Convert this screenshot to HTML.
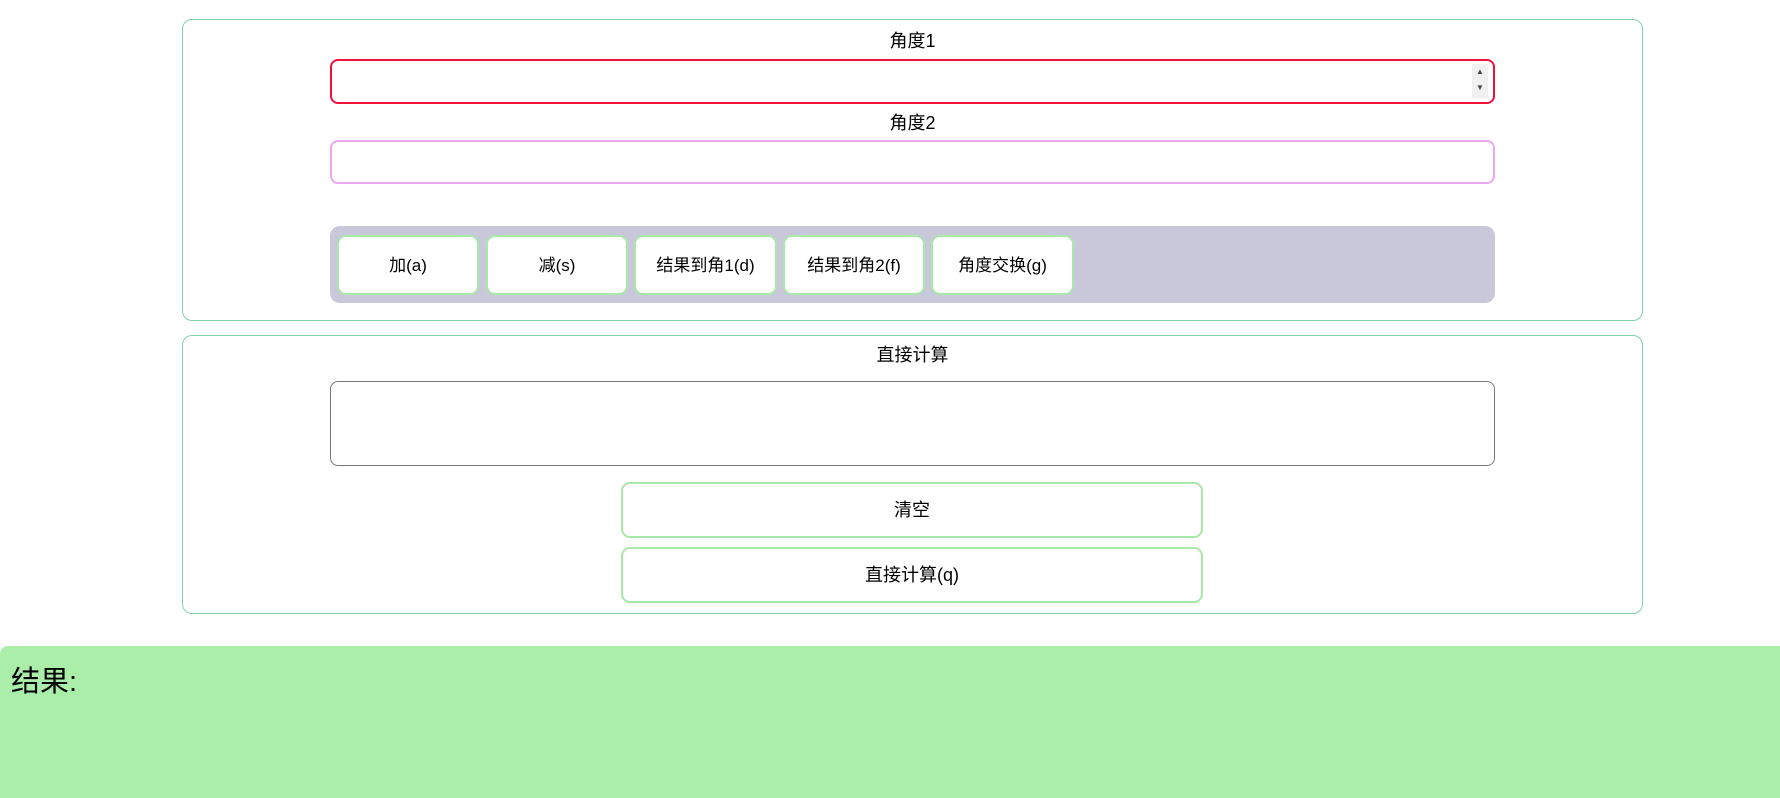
<!DOCTYPE html>
<html><head><meta charset="utf-8"><style>
*{box-sizing:border-box;margin:0;padding:0}
body{width:1780px;height:798px;background:#fff;font-family:"Liberation Sans","Noto Sans CJK SC",sans-serif;position:relative;overflow:hidden;color:#000}
.abs{position:absolute}
.box{border:1px solid #7fd4ac;border-radius:10px}
.lbl{width:1461px;left:182px;text-align:center;font-size:18px;line-height:24px}
.inp{border-radius:8px;background:#fff}
.btn{border:2px solid #a8e8a8;border-radius:9px;background:#fff;text-align:center;font-size:17px;display:flex;align-items:center;justify-content:center;padding-bottom:3px}
</style></head><body>
<div class="abs box" style="left:182px;top:19px;width:1461px;height:302px"></div>
<div class="abs lbl" style="top:29px">角度1</div>
<div class="abs inp" style="left:330px;top:59px;width:1165px;height:45px;border:2px solid #f0103c"></div>
<div class="abs" style="left:1472px;top:64px;width:16px;height:34px;background:#f0f0f0;font-size:8px;color:#444;text-align:center;line-height:16px">▲<br>▼</div>
<div class="abs lbl" style="top:111px">角度2</div>
<div class="abs inp" style="left:330px;top:140px;width:1165px;height:44px;border:2px solid #eaa8ee"></div>
<div class="abs" style="left:330px;top:226px;width:1165px;height:77px;background:#c8c8da;border-radius:10px"></div>
<div class="abs btn" style="left:337px;top:235px;width:142px;height:60px">加(a)</div>
<div class="abs btn" style="left:486px;top:235px;width:142px;height:60px">减(s)</div>
<div class="abs btn" style="left:634px;top:235px;width:143px;height:60px">结果到角1(d)</div>
<div class="abs btn" style="left:783px;top:235px;width:142px;height:60px">结果到角2(f)</div>
<div class="abs btn" style="left:931px;top:235px;width:143px;height:60px">角度交换(g)</div>
<div class="abs box" style="left:182px;top:335px;width:1461px;height:279px"></div>
<div class="abs lbl" style="top:343px">直接计算</div>
<div class="abs inp" style="left:330px;top:381px;width:1165px;height:85px;border:1px solid #767676"></div>
<div class="abs btn" style="left:621px;top:482px;width:582px;height:56px;font-size:18px">清空</div>
<div class="abs btn" style="left:621px;top:547px;width:582px;height:56px;font-size:18px">直接计算(q)</div>
<div class="abs" style="left:0;top:646px;width:1780px;height:152px;background:#aaeeaa;border-radius:8px 0 0 0"></div>
<div class="abs" style="left:11px;top:662px;font-size:29px;line-height:40px">结果:</div>
</body></html>
